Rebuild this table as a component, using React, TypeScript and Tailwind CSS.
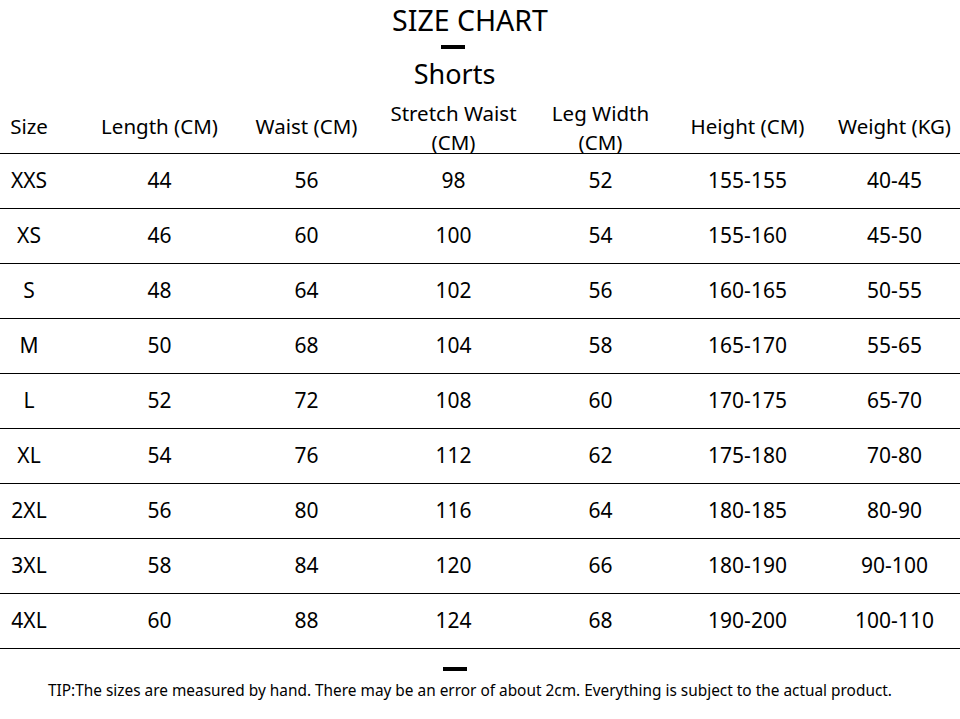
const headers: string[][] = [
  ["Size"],
  ["Length (CM)"],
  ["Waist (CM)"],
  ["Stretch Waist", "(CM)"],
  ["Leg Width", "(CM)"],
  ["Height (CM)"],
  ["Weight (KG)"],
];

const rows: string[][] = [
  ["XXS", "44", "56", "98", "52", "155-155", "40-45"],
  ["XS", "46", "60", "100", "54", "155-160", "45-50"],
  ["S", "48", "64", "102", "56", "160-165", "50-55"],
  ["M", "50", "68", "104", "58", "165-170", "55-65"],
  ["L", "52", "72", "108", "60", "170-175", "65-70"],
  ["XL", "54", "76", "112", "62", "175-180", "70-80"],
  ["2XL", "56", "80", "116", "64", "180-185", "80-90"],
  ["3XL", "58", "84", "120", "66", "180-190", "90-100"],
  ["4XL", "60", "88", "124", "68", "190-200", "100-110"],
];

const cellPad = ["pr-[28px]", "", "", "", "", "", "pl-[8px]"];

export default function App() {
  return (
    <main
      className="w-[960px] h-[719px] bg-white text-black overflow-hidden"
      style={{ fontFamily: '"Noto Sans", "Open Sans", sans-serif' }}
    >
      <header className="flex flex-col items-center h-[99px]">
        <h1 className="mr-[20px] text-[28.5px] leading-[40px]">SIZE CHART</h1>
        <div className="mr-[54px] mt-[5px] w-[24px] h-[4px] bg-black" />
        <h2 className="mr-[51px] mt-[8px] text-[27px] leading-[34px]">Shorts</h2>
      </header>

      <div className="grid grid-cols-[86px_147px_147px_147px_147px_147px_1fr] h-[55px] border-b border-black">
        {headers.map((h, i) => (
          <div
            key={i}
            className={`flex flex-col items-center justify-center text-[20.5px] leading-[29px] ${
              h.length > 1 ? "pb-[6px]" : "pb-[10px]"
            } ${cellPad[i]}`}
          >
            {h.map((line) => (
              <span key={line}>{line}</span>
            ))}
          </div>
        ))}
      </div>

      {rows.map((r) => (
        <div
          key={r[0]}
          className="grid grid-cols-[86px_147px_147px_147px_147px_147px_1fr] h-[55px] border-b border-black"
        >
          {r.map((v, i) => (
            <div
              key={i}
              className={`flex items-center justify-center text-[21px] ${cellPad[i]}`}
            >
              {v}
            </div>
          ))}
        </div>
      ))}

      <footer className="flex flex-col items-center">
        <div className="mr-[50px] mt-[18px] w-[24px] h-[4px] bg-black" />
        <p className="mr-[20px] mt-[8px] text-[15.4px] leading-[24px]">
          TIP:The sizes are measured by hand. There may be an error of about 2cm. Everything is subject to the actual product.
        </p>
      </footer>
    </main>
  );
}
